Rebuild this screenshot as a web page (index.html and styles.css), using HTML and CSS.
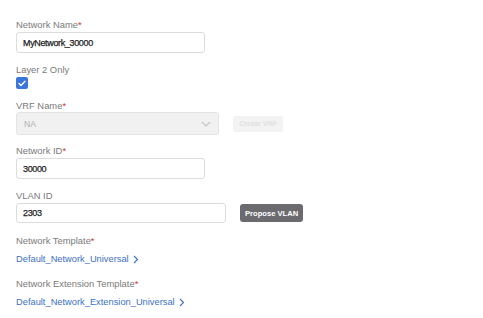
FILE: index.html
```html
<!DOCTYPE html>
<html lang="en">
<head>
    <meta charset="UTF-8">
    <meta name="viewport" content="width=device-width, initial-scale=1.0">
    <title>Create Network</title>
    <link rel="stylesheet" href="styles.css">
</head>
<body>
    <form class="network-form">
        <div class="field">
            <label class="field-label">Network Name<span class="req">*</span></label>
            <input class="text-input w-name tall" type="text" value="MyNetwork_30000">
        </div>

        <div class="field">
            <label class="field-label">Layer 2 Only</label>
            <span class="checkbox">
                <svg width="8" height="7" viewBox="0 0 8 7"><path d="M1 3.6 L3 5.5 L7 1.2" fill="none" stroke="#fff" stroke-width="1.4" stroke-linecap="round" stroke-linejoin="round"/></svg>
            </span>
        </div>

        <div class="field field-vrf">
            <label class="field-label">VRF Name<span class="req">*</span></label>
            <div class="row">
                <div class="select-box">
                    <span>NA</span>
                    <svg width="10" height="6" viewBox="0 0 10 6"><path d="M1 1 L5 5 L9 1" fill="none" stroke="#c4c4c4" stroke-width="1.1"/></svg>
                </div>
                <button type="button" class="btn btn-disabled">Create VRF</button>
            </div>
        </div>

        <div class="field">
            <label class="field-label">Network ID<span class="req">*</span></label>
            <input class="text-input w-name tall" type="text" value="30000">
        </div>

        <div class="field field-vlan">
            <label class="field-label">VLAN ID</label>
            <div class="row">
                <input class="text-input w-vlan" type="text" value="2303">
                <button type="button" class="btn btn-dark">Propose VLAN</button>
            </div>
        </div>

        <div class="field field-template">
            <label class="field-label">Network Template<span class="req">*</span></label>
            <a class="link" href="#">Default_Network_Universal
                <svg width="6" height="9" viewBox="0 0 6 9"><path d="M1 1 L4.5 4.5 L1 8" fill="none" stroke="#3d6fc4" stroke-width="1.1"/></svg>
            </a>
        </div>

        <div class="field">
            <label class="field-label">Network Extension Template<span class="req">*</span></label>
            <a class="link" href="#">Default_Network_Extension_Universal
                <svg width="6" height="9" viewBox="0 0 6 9"><path d="M1 1 L4.5 4.5 L1 8" fill="none" stroke="#3d6fc4" stroke-width="1.1"/></svg>
            </a>
        </div>
    </form>
</body>
</html>
```

FILE: styles.css
```css
body {
    margin: 0;
    background: #fff;
    font-family: "Liberation Sans", Arial, sans-serif;
}
.network-form {
    padding: 19px 16px 0;
}
.field {
    display: flex;
    flex-direction: column;
    align-items: flex-start;
    margin-bottom: 11px;
}
.field-vrf {
    margin-bottom: 10px;
}
.field-vlan {
    margin-bottom: 12px;
}
.field-template {
    margin-bottom: 13px;
}
.field-label {
    font-size: 9.4px;
    line-height: 12px;
    color: #7a7a7a;
    margin-bottom: 1px;
}
.req {
    color: #d0312d;
}
.row {
    display: flex;
    align-items: center;
    gap: 14px;
}
.field-vrf .row {
    margin-top: -1px;
}
.text-input {
    box-sizing: border-box;
    height: 20px;
    padding: 0 6px;
    border: 1px solid #dcdcdc;
    border-radius: 3px;
    font-family: "Liberation Sans", Arial, sans-serif;
    font-size: 9px;
    letter-spacing: -0.35px;
    -webkit-text-stroke: 0.25px #1e1e1e;
    color: #1e1e1e;
    outline: none;
}
.tall {
    height: 21px;
}
.w-name {
    width: 189px;
}
.w-vlan {
    width: 210px;
}
.checkbox {
    box-sizing: border-box;
    width: 12px;
    height: 12px;
    border-radius: 2px;
    background: #3b76db;
    display: flex;
    align-items: center;
    justify-content: center;
}
.select-box {
    box-sizing: border-box;
    width: 203px;
    height: 23px;
    padding: 0 7px;
    border: 1px solid #e4e4e4;
    border-radius: 3px;
    background: #f1f1f1;
    display: flex;
    align-items: center;
    justify-content: space-between;
    font-size: 8.6px;
    color: #b0b0b0;
}
.btn {
    border: none;
    border-radius: 3px;
    font-family: "Liberation Sans", Arial, sans-serif;
    font-weight: 700;
    padding: 0 5px;
    white-space: nowrap;
}
.btn-disabled {
    background: #f3f3f3;
    color: #e0e0e0;
    font-size: 7px;
    width: 50px;
    height: 16px;
}
.btn-dark {
    background: #6b6b6f;
    color: #fff;
    font-size: 7.6px;
    width: 63px;
    height: 18px;
}
.link {
    margin-top: 5px;
    font-size: 9.3px;
    line-height: 12px;
    color: #3d6fc4;
    text-decoration: none;
    display: flex;
    align-items: center;
    gap: 4px;
}
```
